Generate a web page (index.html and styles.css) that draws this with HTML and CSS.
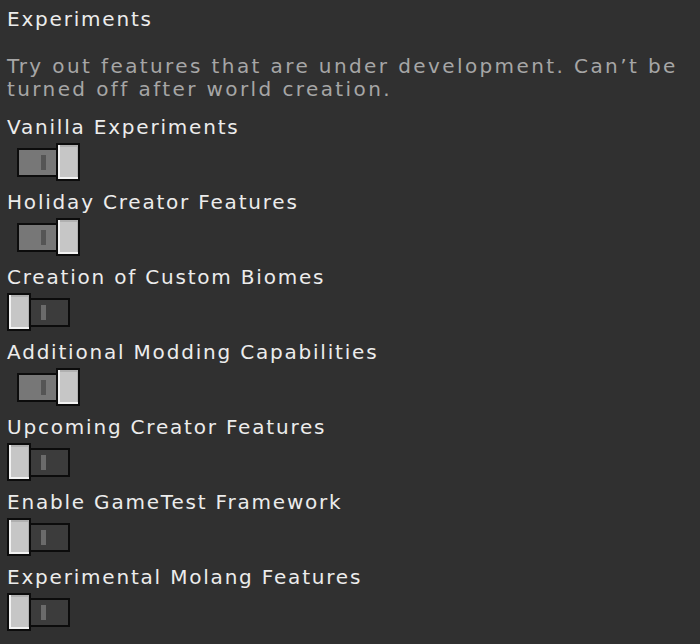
FILE: index.html
```html
<!DOCTYPE html>
<html lang="en">
<head>
<meta charset="utf-8">
<title>Experiments</title>
<link rel="stylesheet" href="styles.css">
</head>
<body>
<main class="panel">
  <h1 class="panel-title">Experiments</h1>
  <p class="panel-desc">Try out features that are under development. Can’t be turned off after world creation.</p>
  <ul class="option-list">
    <li class="option">
      <span class="option-label">Vanilla Experiments</span>
      <span class="toggle is-on"><span class="track"><span class="track-mark"></span></span><span class="knob"></span></span>
    </li>
    <li class="option">
      <span class="option-label">Holiday Creator Features</span>
      <span class="toggle is-on"><span class="track"><span class="track-mark"></span></span><span class="knob"></span></span>
    </li>
    <li class="option">
      <span class="option-label">Creation of Custom Biomes</span>
      <span class="toggle"><span class="knob"></span><span class="track"><span class="track-mark"></span></span></span>
    </li>
    <li class="option">
      <span class="option-label">Additional Modding Capabilities</span>
      <span class="toggle is-on"><span class="track"><span class="track-mark"></span></span><span class="knob"></span></span>
    </li>
    <li class="option">
      <span class="option-label">Upcoming Creator Features</span>
      <span class="toggle"><span class="knob"></span><span class="track"><span class="track-mark"></span></span></span>
    </li>
    <li class="option">
      <span class="option-label">Enable GameTest Framework</span>
      <span class="toggle"><span class="knob"></span><span class="track"><span class="track-mark"></span></span></span>
    </li>
    <li class="option">
      <span class="option-label">Experimental Molang Features</span>
      <span class="toggle"><span class="knob"></span><span class="track"><span class="track-mark"></span></span></span>
    </li>
  </ul>
</main>
</body>
</html>
```

FILE: styles.css
```css
html, body {
  margin: 0;
  padding: 0;
  background: #303030;
}

body {
  font-family: "DejaVu Sans", "Liberation Sans", sans-serif;
  font-size: 20px;
  line-height: 23px;
  letter-spacing: 1.8px;
}

.panel {
  padding: 8px 0 0 7px;
}

.panel-title {
  margin: 0;
  font-size: 20px;
  font-weight: normal;
  line-height: 23px;
  color: #ececec;
}

.panel-desc {
  margin: 24px 0 0;
  width: 686px;
  letter-spacing: 2.4px;
  color: #a6a6a6;
}

.option-list {
  list-style: none;
  margin: 15px 0 0;
  padding: 0;
}

.option {
  display: flex;
  flex-direction: column;
  align-items: flex-start;
  height: 75px;
}

.option-label {
  color: #ececec;
}

/* switch: framed track plus a raised knob on the active side */
.toggle {
  display: flex;
  align-items: center;
  margin-top: 4px;
  margin-left: 0;
}

.toggle.is-on {
  margin-left: 10px;
}

.track {
  display: flex;
  align-items: center;
  box-sizing: border-box;
  width: 41px;
  height: 29px;
  border: 2px solid #0c0c0c;
  background: #3c3c3c;
}

.toggle .track {
  margin-left: -2px;
  padding-left: 10px;
}

.toggle.is-on .track {
  margin-left: 0;
  margin-right: -2px;
  padding-left: 22px;
  background: #777777;
}

.track-mark {
  width: 5px;
  height: 15px;
  background: #6b6b6b;
}

.toggle.is-on .track-mark {
  background: #555555;
}

.knob {
  position: relative;
  z-index: 1;
  box-sizing: border-box;
  width: 24px;
  height: 38px;
  border: 2px solid #0c0c0c;
  background: #c6c6c6;
  box-shadow: inset 2px -2px 0 #f2f2f2, inset -1px 2px 0 #b0b0b0;
}
```
